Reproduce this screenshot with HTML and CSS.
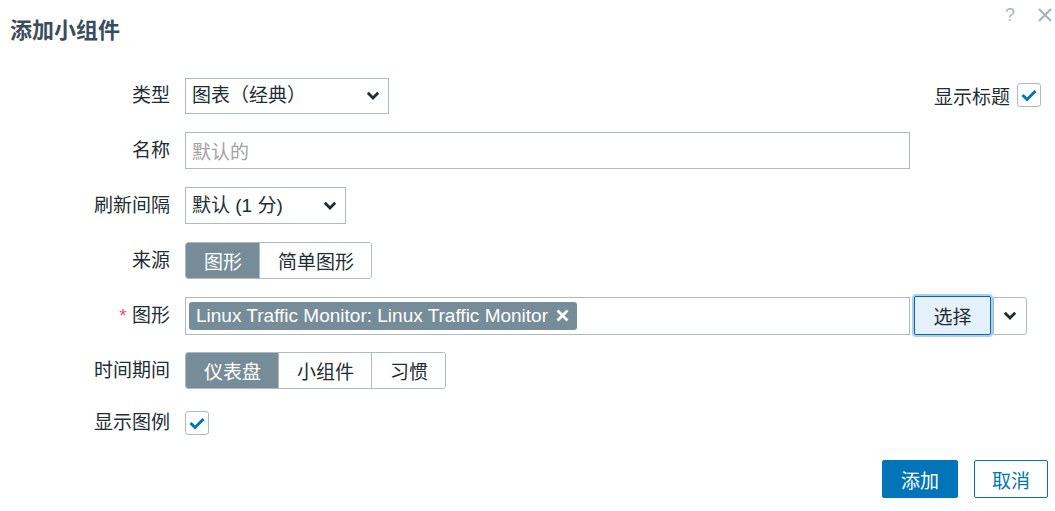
FILE: index.html
```html
<!DOCTYPE html>
<html lang="zh">
<head>
<meta charset="utf-8">
<title>添加小组件</title>
<link rel="stylesheet" href="styles.css">
</head>
<body>
<div class="dialog">
  <div class="header">
    <h4 class="title">添加小组件</h4>
    <div class="tools">
      <span class="help">?</span>
      <svg class="close" width="16" height="16" viewBox="0 0 16 16"><path d="M2 2 L14 14 M14 2 L2 14" stroke="#aab7be" stroke-width="2.4" fill="none"/></svg>
    </div>
  </div>

  <div class="form">
    <div class="row">
      <div class="label">类型</div>
      <div class="field">
        <div class="select sel-type"><span>图表（经典）</span>
          <svg class="chev" width="14" height="9" viewBox="0 0 14 9"><path d="M1.8 1.8 L7 7 L12.2 1.8" stroke="#1f2c33" stroke-width="2.8" fill="none"/></svg>
        </div>
        <div class="show-title">
          <span>显示标题</span>
          <span class="checkbox"><svg width="24" height="24" viewBox="0 0 24 24"><path d="M5.5 12 L10 16.5 L18.5 8" stroke="#0275b8" stroke-width="3" fill="none"/></svg></span>
        </div>
      </div>
    </div>

    <div class="row">
      <div class="label">名称</div>
      <div class="field">
        <div class="input placeholder">默认的</div>
      </div>
    </div>

    <div class="row">
      <div class="label">刷新间隔</div>
      <div class="field">
        <div class="select sel-refresh"><span>默认 (1 分)</span>
          <svg class="chev" width="14" height="9" viewBox="0 0 14 9"><path d="M1.8 1.8 L7 7 L12.2 1.8" stroke="#1f2c33" stroke-width="2.8" fill="none"/></svg>
        </div>
      </div>
    </div>

    <div class="row">
      <div class="label">来源</div>
      <div class="field">
        <div class="segmented">
          <span class="seg active">图形</span><span class="seg">简单图形</span>
        </div>
      </div>
    </div>

    <div class="row">
      <div class="label"><span class="req">*</span> 图形</div>
      <div class="field">
        <div class="multiselect">
          <span class="tag">Linux Traffic Monitor: Linux Traffic Monitor
            <svg class="tag-x" width="15" height="15" viewBox="0 0 15 15"><path d="M2.5 2.5 L12.5 12.5 M12.5 2.5 L2.5 12.5" stroke="#ffffff" stroke-width="2.8" fill="none"/></svg>
          </span>
        </div>
        <button class="btn-select">选择</button>
        <button class="btn-drop"><svg width="14" height="9" viewBox="0 0 14 9"><path d="M1.8 1.8 L7 7 L12.2 1.8" stroke="#1f2c33" stroke-width="2.8" fill="none"/></svg></button>
      </div>
    </div>

    <div class="row">
      <div class="label">时间期间</div>
      <div class="field">
        <div class="segmented">
          <span class="seg active">仪表盘</span><span class="seg">小组件</span><span class="seg">习惯</span>
        </div>
      </div>
    </div>

    <div class="row row-check">
      <div class="label">显示图例</div>
      <div class="field">
        <span class="checkbox"><svg width="24" height="24" viewBox="0 0 24 24"><path d="M5.5 12 L10 16.5 L18.5 8" stroke="#0275b8" stroke-width="3" fill="none"/></svg></span>
      </div>
    </div>
  </div>

  <div class="footer">
    <button class="btn btn-primary">添加</button>
    <button class="btn btn-secondary">取消</button>
  </div>
</div>
</body>
</html>
```

FILE: styles.css
```css
* { box-sizing: border-box; }

html, body {
  margin: 0;
  padding: 0;
  background: #ffffff;
}

body {
  font-family: "Liberation Sans", "Noto Sans CJK SC", sans-serif;
  font-size: 19px;
  color: #1f2c33;
}

.dialog {
  width: 1055px;
  height: 511px;
  display: flex;
  flex-direction: column;
}

.header {
  display: flex;
  justify-content: space-between;
  align-items: flex-start;
  padding: 0 2px 0 10px;
}

.title {
  margin: 0;
  padding-top: 13px;
  font-size: 22px;
  line-height: 30px;
  font-weight: bold;
  color: #3a4d5a;
  font-family: "Noto Sans CJK SC", sans-serif;
}

.tools {
  display: flex;
  align-items: center;
  gap: 22px;
  padding-top: 6px;
}

.help {
  font-family: "Liberation Sans", sans-serif;
  font-size: 18px;
  line-height: 18px;
  color: #aab7be;
}

.close { display: block; }

.form {
  display: flex;
  flex-direction: column;
  gap: 18px;
  padding-top: 34px;
  padding-right: 14px;
}

.row {
  display: flex;
  align-items: center;
  height: 37px;
}

.row-check {
  height: 24px;
  margin-top: 4px;
}

.label {
  width: 170px;
  flex: none;
  text-align: right;
  line-height: 24px;
  white-space: nowrap;
}

.req {
  color: #e45959;
}

.field {
  flex: 1;
  display: flex;
  align-items: center;
  margin-left: 15px;
  height: 100%;
}

.select {
  height: 36px;
  border: 1px solid #acbbc2;
  background: #ffffff;
  display: flex;
  align-items: center;
  justify-content: space-between;
  padding: 0 8px 0 6px;
  line-height: 24px;
}

.sel-type { width: 204px; }
.sel-refresh { width: 161px; height: 37px; }

.chev { display: block; }

.show-title {
  margin-left: auto;
  display: flex;
  align-items: center;
  gap: 7px;
  margin-top: -1px;
}

.checkbox {
  width: 24px;
  height: 24px;
  border: 1px solid #acbbc2;
  border-radius: 3px;
  background: #ffffff;
  display: flex;
  align-items: center;
  justify-content: center;
  flex: none;
}

.checkbox svg { display: block; margin: -1px; }

.input {
  width: 725px;
  height: 37px;
  border: 1px solid #acbbc2;
  padding: 0 6px;
  display: flex;
  align-items: center;
}

.placeholder { color: #a3a3a3; }

.segmented {
  display: flex;
  height: 37px;
  border: 1px solid #acbbc2;
  border-radius: 3px;
  overflow: hidden;
}

.seg {
  display: flex;
  align-items: center;
  padding: 0 17px 0 18px;
  background: #ffffff;
  border-left: 1px solid #acbbc2;
  color: #1f2c33;
}

.seg:first-child { border-left: none; }

.seg.active {
  background: #768d99;
  color: #ffffff;
}

.multiselect {
  width: 725px;
  height: 38px;
  border: 1px solid #acbbc2;
  padding: 4px 3px;
  display: flex;
  align-items: flex-start;
}

.tag {
  height: 28px;
  background: #768d99;
  color: #ffffff;
  border-radius: 3px;
  padding: 0 7px 0 7px;
  display: flex;
  align-items: center;
  gap: 7px;
  white-space: nowrap;
}

.tag-x { display: block; }

.btn-select {
  margin-left: 4px;
  width: 77px;
  height: 39px;
  border: 1px solid #0b66a8;
  border-radius: 2px;
  background: #e5f2fc;
  color: #1f2c33;
  font-family: inherit;
  font-size: 19px;
  box-shadow: 0 0 0 2px #a8d1f2;
  padding: 0;
}

.btn-drop {
  margin-left: 2px;
  width: 34px;
  height: 38px;
  border: 1px solid #acbbc2;
  border-radius: 0 3px 3px 0;
  background: #ffffff;
  display: flex;
  align-items: center;
  justify-content: center;
  padding: 0;
}

.footer {
  display: flex;
  justify-content: flex-end;
  gap: 16px;
  padding: 25px 7px 0 0;
}

.btn {
  height: 38px;
  width: 76px;
  padding: 0;
  font-family: inherit;
  font-size: 19px;
  border-radius: 2px;
}

.btn-secondary { width: 74px; }

.btn-primary {
  background: #0275b8;
  border: 1px solid #0275b8;
  color: #ffffff;
}

.btn-secondary {
  background: #ffffff;
  border: 1px solid #0275b8;
  color: #0275b8;
}
```
